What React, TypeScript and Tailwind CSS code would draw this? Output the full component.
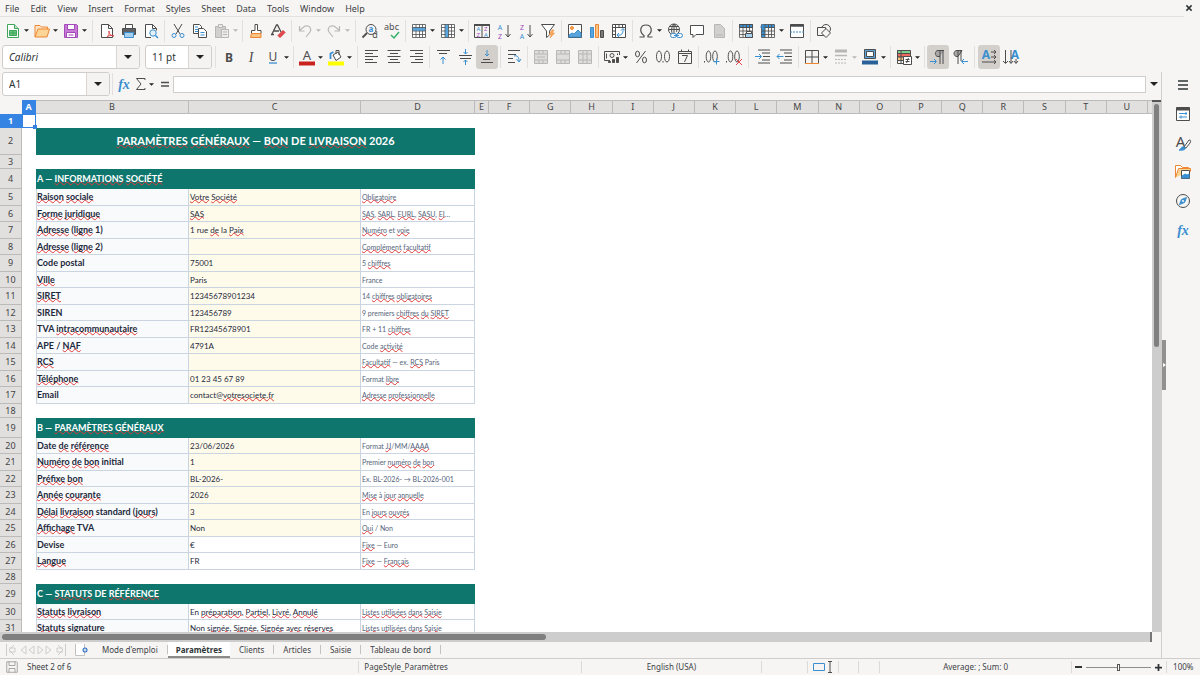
import type { ReactNode } from "react";
import clsx from "clsx";

const ink = "#4d4d4d";
const blue = "#3a8fd0";
const pale = "#b9b7b5";
const purple = "#a349b8";
const orange = "#ed8733";

interface GlyphProps {
  children: ReactNode;
  size?: string;
  color?: string;
}

function Glyph({ children, size = "h-4 w-4", color = ink }: GlyphProps) {
  return (
    <svg
      viewBox="0 0 16 16"
      className={clsx(size, "shrink-0 overflow-visible")}
      fill="none"
      stroke={color}
      strokeWidth="1"
      aria-hidden="true"
    >
      {children}
    </svg>
  );
}

interface LetterProps {
  x: number;
  y: number;
  size: number;
  fill?: string;
  bold?: boolean;
  italic?: boolean;
  serif?: boolean;
  children: string;
}

function Letter({ x, y, size, fill = ink, bold, italic, serif, children }: LetterProps) {
  return (
    <text
      x={x}
      y={y}
      fontSize={size}
      fill={fill}
      stroke="none"
      textAnchor="middle"
      fontWeight={bold ? 700 : 400}
      fontStyle={italic ? "italic" : "normal"}
      fontFamily={serif ? "Liberation Serif, serif" : "Noto Sans, sans-serif"}
    >
      {children}
    </text>
  );
}

const gridLines = "M1.5 1.5h13v13h-13zM1.5 4.5h13M1.5 8h13M1.5 11.5h13M5 1.5v13M8.5 1.5v13M11.5 1.5v13";

const icons: Record<string, ReactNode> = {
  new: (
    <Glyph color="#3fa65a">
      <path d="M2.5 1.5h7l4 4v9h-11z" fill="#fff" />
      <path d="M9.5 1.5v4h4" fill="#bfe3c6" />
      <path d="M4.5 7.5h7v5h-7zM4.5 10h7M8 7.5v5" fill="#6cc585" />
    </Glyph>
  ),
  open: (
    <Glyph color={orange}>
      <path d="M1 14V2.500h5l1.500 1.500h6v2" fill="#fbe3c4" />
      <path d="M1 14l3-8h11.500l-2.500 8z" fill="#fcd596" />
    </Glyph>
  ),
  save: (
    <Glyph color={purple}>
      <path d="M1.500 1.500h12l1 1v12h-13z" fill="#c77bd6" />
      <path d="M4.500 1.500h7v5h-7zM3.500 9.500h9v5h-9z" fill="#fff" />
      <path d="M5.500 12h5" />
    </Glyph>
  ),
  pdf: (
    <Glyph>
      <path d="M2.500 1.500h7l4 4v9h-11z" fill="#fff" />
      <path d="M9.500 1.500v4h4" />
      <path d="M8 14c3-3 3-6 2-6s0 5 5 5c0-1-5-1-7 1z" stroke="#dd4b4b" />
    </Glyph>
  ),
  print: (
    <Glyph>
      <path d="M4.500 5.500v-4h7v4" fill="#fff" />
      <path d="M1.500 5.500h13v6h-13z" fill="#5d6166" />
      <path d="M3.500 9.500h9v5h-9z" fill="#a6d0ee" stroke={blue} />
    </Glyph>
  ),
  preview: (
    <Glyph>
      <path d="M8 14.500h-5.500v-13h7l4 4v2" fill="#fff" />
      <path d="M9.500 1.500v4h4" />
      <circle cx="10" cy="10" r="3.200" stroke={blue} fill="#e3f1fb" />
      <path d="M12.500 12.500l2.500 2.500" stroke={blue} strokeWidth="1.500" />
    </Glyph>
  ),
  cut: (
    <Glyph>
      <path d="M4 1l6 10M12 1L6 11" />
      <circle cx="4" cy="12.500" r="2" stroke={blue} />
      <circle cx="12" cy="12.500" r="2" stroke={blue} />
    </Glyph>
  ),
  copy: (
    <Glyph>
      <path d="M1.500 1.500h6l2 2v7h-8z" fill="#fff" />
      <path d="M3 4h3M3 6.500h3M3 8.500h3" stroke={blue} />
      <path d="M6.500 5.500h5l3 3v6h-8z" fill="#fff" />
      <path d="M8.500 9.500h4M8.500 12h4" stroke={blue} />
    </Glyph>
  ),
  paste: (
    <Glyph color={pale}>
      <path d="M1.500 3.500h10v11h-10z" fill="#d2d0ce" />
      <path d="M4.500 1.500h4v3h-4zM7.500 6.500h7v8h-7zM9 9h4M9 11.500h4" fill="#ececeb" />
    </Glyph>
  ),
  brush: (
    <Glyph>
      <path d="M7 1.500h2.500v6H13v3H3.500v-3H7z" fill="#fff" />
      <path d="M3.500 10.500H13v4H2.500z" fill="#f9c483" stroke={orange} />
    </Glyph>
  ),
  clear: (
    <Glyph>
      <path d="M2 11L6.500 2h1L11 9M4 8h5M1 11.500h3" strokeWidth="1.300" />
      <path d="M8 12.500l5-5 2 2-5 5z" fill="#e5484d" stroke="#d23338" />
    </Glyph>
  ),
  undo: (
    <Glyph color={pale}>
      <path d="M3 7l5-4c5-1 7 3 5 6l-4 5M2.500 3v5h5" strokeWidth="1.200" />
    </Glyph>
  ),
  redo: (
    <Glyph color={pale}>
      <path d="M13 7L8 3C3 2 1 6 3 9l4 5M13.500 3v5h-5" strokeWidth="1.200" />
    </Glyph>
  ),
  find: (
    <Glyph>
      <circle cx="9" cy="6.500" r="5" />
      <path d="M5 10l-4.500 4.500" strokeWidth="1.800" />
      <Letter x={9} y={9} size={8} fill={blue} bold>a</Letter>
      <Letter x={13} y={15} size={9}>d</Letter>
    </Glyph>
  ),
  spell: (
    <Glyph>
      <Letter x={7.500} y={7} size={9}>abc</Letter>
      <path d="M7 12l3 3 5-6" stroke="#33b26b" strokeWidth="1.500" />
    </Glyph>
  ),
  row: (
    <Glyph>
      <path d="M1.500 1.500h13v13h-13z" fill="#fff" stroke="none" />
      <path d="M1.500 4.500h13v3.500h-13z" fill="#5aa5dc" stroke="none" />
      <path d={gridLines} strokeWidth=".8" />
      <path d="M2 6.300h12" stroke="#5aa5dc" strokeWidth="2.500" />
    </Glyph>
  ),
  column: (
    <Glyph>
      <path d="M1.500 1.500h13v13h-13z" fill="#fff" stroke="none" />
      <path d="M5 1.500h3.500v13H5z" fill="#5aa5dc" stroke="none" />
      <path d={gridLines} strokeWidth=".8" />
      <path d="M6.800 2v12" stroke="#5aa5dc" strokeWidth="2.500" />
    </Glyph>
  ),
  sort: (
    <Glyph>
      <path d="M.500 1.500h15v13H.500zM8 1.500v13" />
      <path d="M0 2h16" strokeWidth="2" />
      <Letter x={4.300} y={8} size={6} fill={blue}>A</Letter>
      <Letter x={4.300} y={14} size={6} fill={purple}>Z</Letter>
      <Letter x={11.800} y={8} size={6} fill={purple}>Z</Letter>
      <Letter x={11.800} y={14} size={6} fill={blue}>A</Letter>
    </Glyph>
  ),
  ascending: (
    <Glyph>
      <Letter x={4} y={6.500} size={7} fill={blue}>A</Letter>
      <Letter x={4} y={15.500} size={7} fill={purple}>Z</Letter>
      <path d="M12 2v12M9.500 11l2.500 3 2.500-3" />
    </Glyph>
  ),
  descending: (
    <Glyph>
      <Letter x={4} y={6.500} size={7} fill={purple}>Z</Letter>
      <Letter x={4} y={15.500} size={7} fill={blue}>A</Letter>
      <path d="M12 2v12M9.500 11l2.500 3 2.500-3" />
    </Glyph>
  ),
  filter: (
    <Glyph>
      <path d="M1.500 1.500h13L9.500 8v4l-3 2.500V8z" fill="#fff" />
      <path d="M12 7l-3 4.500h2.500L10 15l4.500-5H12l2-3z" fill="#f8ae5a" stroke={orange} strokeWidth=".6" />
    </Glyph>
  ),
  image: (
    <Glyph>
      <path d="M1.500 1.500h13v13h-13z" fill="#fff" />
      <path d="M2 14v-2l3-2 2 1 4-4 3 3v4z" fill="#5aa5dc" stroke={blue} />
      <circle cx="5" cy="5" r="1.500" fill="#f8ae5a" stroke={orange} />
    </Glyph>
  ),
  chart: (
    <Glyph>
      <path d="M1.500 4.500h3v10h-3z" fill="#5aa5dc" stroke={blue} />
      <path d="M6.500 1.500h3v13h-3z" fill="#f9c483" stroke={orange} />
      <path d="M11.500 7.500h3v7h-3z" fill="#7a7a7a" />
    </Glyph>
  ),
  pivot: (
    <Glyph>
      <path d="M1.500 1.500h13v13h-13zM1.500 4.500h13M4.500 1.500v13M8 1.500v3M11.500 1.500v3M1.500 8h3M1.500 11.500h3" fill="#fff" />
      <path d="M6.500 12c4 1 6-2 5.500-6M8 10l-2 2 2 2M10 7.500l2-2 2 2" stroke={blue} />
    </Glyph>
  ),
  omega: (
    <Glyph>
      <path d="M1.500 14H6v-1.500C1 9 2 2 8 2s7 7 2 10.500V14h4.500" strokeWidth="1.200" />
    </Glyph>
  ),
  link: (
    <Glyph>
      <circle cx="7" cy="6.500" r="5.500" />
      <path d="M1.500 6.500h11M2.500 3.500h9M7 1v11M7 1C4 4 4 9 6 12M7 1c3 3 3 6 2.500 8" />
      <rect x="3.500" y="10.500" width="6" height="4" rx="2" stroke={blue} fill="#f6f5f4" />
      <rect x="9.500" y="10.500" width="6" height="4" rx="2" stroke={blue} fill="#f6f5f4" />
      <path d="M7 12.500h5" stroke={blue} />
    </Glyph>
  ),
  comment: (
    <Glyph>
      <path d="M1.500 2.500h13v9H7l-3 3v-3H1.500z" fill="#fff" />
    </Glyph>
  ),
  headers: (
    <Glyph color={pale}>
      <path d="M3.500 1.500h6l4 4v9h-10z" fill="#d2d0ce" />
      <path d="M5 12h7" />
    </Glyph>
  ),
  printArea: (
    <Glyph>
      <path d="M1.500 1.500h13v3h-13z" fill={blue} />
      <path d={gridLines} strokeWidth=".8" />
      <path d="M7.500 10.500h7v4h-7z" fill="#a6d0ee" />
      <path d="M8.500 8.500h5v2h-5z" fill="#fff" />
    </Glyph>
  ),
  freeze: (
    <Glyph>
      <path d="M1.500 1.500h13v3.500H5v9.500H1.500z" fill={blue} stroke="none" />
      <path d={gridLines} strokeWidth=".8" />
      <path d="M0 4h5M2.500 1v6" stroke={blue} />
    </Glyph>
  ),
  split: (
    <Glyph>
      <path d="M1.500 1.500h13v13h-13z" fill="#fff" />
      <path d="M1.500 2.500h13" strokeWidth="2.500" />
      <path d="M1 9h14" stroke={blue} strokeDasharray="2 1" />
    </Glyph>
  ),
  shapes: (
    <Glyph>
      <circle cx="10" cy="6" r="4.500" />
      <path d="M1.500 4.500h8v8h-8z" fill="#f6f5f4" />
      <path d="M10 5.500l4.500 4.500-4.500 4.500L5.500 10z" fill="#f6f5f4" />
    </Glyph>
  ),
  bold: (
    <Glyph>
      <Letter x={8} y={12.500} size={12} bold>B</Letter>
    </Glyph>
  ),
  italic: (
    <Glyph>
      <Letter x={8} y={12.500} size={14} italic serif>I</Letter>
    </Glyph>
  ),
  underline: (
    <Glyph>
      <Letter x={8} y={11.500} size={12}>U</Letter>
      <path d="M4 14h8" stroke={blue} strokeWidth="1.300" />
    </Glyph>
  ),
  fontColor: (
    <Glyph>
      <Letter x={8} y={11} size={13}>A</Letter>
      <path d="M0 14.500h16" stroke="#c9211e" strokeWidth="4" />
    </Glyph>
  ),
  fill: (
    <Glyph>
      <path d="M2.500 10V4.500l3-1.500" stroke={blue} strokeWidth="1.800" />
      <path d="M5 6l5-3 3 5-5 3.500zM8 5V1.500h3V6" fill="#fff" />
      <path d="M0 14.500h16" stroke="#ffff00" strokeWidth="4" />
    </Glyph>
  ),
  left: (
    <Glyph>
      <path d="M1 1.500h13M1 4.500h8M1 7.500h13M1 10.500h8M1 13.500h12" />
    </Glyph>
  ),
  center: (
    <Glyph>
      <path d="M1.500 1.500h13M4 4.500h8M1.500 7.500h13M4 10.500h8M2 13.500h12" />
    </Glyph>
  ),
  right: (
    <Glyph>
      <path d="M2 1.500h13M7 4.500h8M2 7.500h13M7 10.500h8M3 13.500h12" />
    </Glyph>
  ),
  top: (
    <Glyph>
      <path d="M2 1.500h13M4 4.500h8" />
      <path d="M8 15V8M5.500 10.500L8 8l2.500 2.500" stroke={blue} />
    </Glyph>
  ),
  middle: (
    <Glyph>
      <path d="M2 6.500h13M3 9.500h11" />
      <path d="M8.500 0v5M6.500 3l2 2 2-2M8.500 16v-5M6.500 13l2-2 2 2" stroke={blue} />
    </Glyph>
  ),
  bottom: (
    <Glyph>
      <path d="M4 10.500h7M2 13.500h12" />
      <path d="M8 1v6M6 5l2 2 2-2" stroke={blue} />
    </Glyph>
  ),
  wrap: (
    <Glyph>
      <path d="M2 1.500h12M2 5.500h8M2 9.500h5M2 13.500h7" />
      <path d="M8 7c3-1 5 1 5 5M10.500 10l2.500 3 2-3" stroke={blue} />
    </Glyph>
  ),
  merge: (
    <Glyph color={pale}>
      <path d="M1.500 1.500h13v13h-13zM1.500 5h13M1.500 11h13M6 1.500V5M10 1.500V5M6 11v3.500M10 11v3.500M4 8h8" fill="#dedddb" />
    </Glyph>
  ),
  mergeCells: (
    <Glyph color={pale}>
      <path d="M1.500 1.500h13v13h-13zM1.500 5h13M1.500 11h13M6 1.500V5M10 1.500V5M6 11v3.500M10 11v3.500" fill="#dedddb" />
    </Glyph>
  ),
  unmerge: (
    <Glyph color={pale}>
      <path d="M1.500 1.500h13v13h-13zM1.500 5h13M1.500 11h13M6 1.500v13M10 1.500v13" fill="#dedddb" />
    </Glyph>
  ),
  currency: (
    <Glyph>
      <path d="M6 11.500H.500v-9h15V6M2.500 4.500v5M13.500 4.500V6" />
      <circle cx="8" cy="6.500" r="2" />
      <path d="M8.500 10.500h2v3h-2zM12.500 8.500h2v5h-2zM4.500 12.500h2v1h-2z" fill={ink} />
    </Glyph>
  ),
  percent: (
    <Glyph>
      <path d="M12.500 2l-9 12" />
      <ellipse cx="4.500" cy="5" rx="2" ry="2.800" />
      <ellipse cx="11.500" cy="11" rx="2" ry="2.800" />
    </Glyph>
  ),
  number: (
    <Glyph>
      <ellipse cx="4" cy="7.500" rx="2.500" ry="5.500" />
      <ellipse cx="12" cy="7.500" rx="2.500" ry="5.500" />
      <path d="M8 12v1.500" />
    </Glyph>
  ),
  date: (
    <Glyph>
      <path d="M1.500 2.500h13v12h-13zM1.500 4.500h13M4.500.500v2M11.500.500v2" />
      <path d="M5 6.500h5.500L7.500 13" />
    </Glyph>
  ),
  addDecimal: (
    <Glyph>
      <path d="M.500 12v1.500" />
      <ellipse cx="4.500" cy="7.500" rx="2.300" ry="5.500" />
      <ellipse cx="11" cy="7.500" rx="2.300" ry="5.500" />
      <path d="M12.500 9.500v6M9.500 12.500h6" stroke={blue} />
    </Glyph>
  ),
  removeDecimal: (
    <Glyph>
      <path d="M.500 12v1.500" />
      <ellipse cx="4.500" cy="7.500" rx="2.300" ry="5.500" />
      <ellipse cx="11" cy="7.500" rx="2.300" ry="5.500" />
      <path d="M10 10l6 6M16 10l-6 6" stroke="#e5484d" />
    </Glyph>
  ),
  indent: (
    <Glyph>
      <path d="M3 1h12M7 4h8M8 7.500h7M7 11h8M3 14h12" />
      <path d="M0 7.500h6M4 5l2.500 2.500L4 10" stroke={blue} />
    </Glyph>
  ),
  outdent: (
    <Glyph>
      <path d="M3 1h12M7 4h8M8 7.500h7M7 11h8M3 14h12" />
      <path d="M6.500 7.500H0M2.500 5L0 7.500 2.500 10" stroke={blue} />
    </Glyph>
  ),
  borders: (
    <Glyph>
      <path d="M1.500 14.500v-13h13v13M8 1.500v13M1.500 8h13" />
      <path d="M1 14.500h14" stroke={orange} />
    </Glyph>
  ),
  borderStyle: (
    <Glyph color={pale}>
      <path d="M2 2h12" strokeWidth="3" />
      <path d="M2 6.500h12" strokeWidth="1.500" />
      <path d="M2 10.500h12M2 14h12" strokeDasharray="2 1" />
    </Glyph>
  ),
  borderColor: (
    <Glyph>
      <path d="M2.500.500h11v9h-11z" fill="#5aa5dc" />
      <path d="M4.500 2.500h7v5h-7z" fill="#fff" />
      <path d="M0 13.500h16" stroke="#2a6099" strokeWidth="4" />
    </Glyph>
  ),
  conditional: (
    <Glyph>
      <path d="M1.500 1.500h13v3h-13z" fill="#7fd18f" />
      <path d="M1.500 4.500h13V8h-13z" fill="#ee6b5f" />
      <path d="M1.500 8h6v3.500h-6z" fill="#f9c483" />
      <path d="M5 1.500v13M1.500 14.500h6M1.500 1.500v13" />
      <path d="M7.500 7.500h8v8h-8zM9.500 10.500h4M9.500 12.500h4M10.500 14l2-5" fill="#fff" />
    </Glyph>
  ),
  ltr: (
    <Glyph>
      <path d="M14 1.500H8c-3.500 0-3.500 6 0 6h2" fill="#a9a7a5" />
      <path d="M10 1.500V15M13 1.500V15" />
      <path d="M0 12.500h6M4 10l2.500 2.500L4 15" stroke={blue} />
    </Glyph>
  ),
  rtl: (
    <Glyph>
      <path d="M10 1.500H5c-4 0-4 6 0 6h1z" fill="#a9a7a5" />
      <path d="M6 1.500V15M9 1.500V12" />
      <path d="M16 12.500h-6M12 10l-2.500 2.500L12 15" stroke={blue} />
    </Glyph>
  ),
  horizontalText: (
    <Glyph>
      <Letter x={5} y={9.500} size={12} fill={blue} bold>A</Letter>
      <path d="M10 3h5M10 8h5M1 13h14M13 1l2 2-2 2M13 6l2 2-2 2M13 11l2 2-2 2" />
    </Glyph>
  ),
  verticalText: (
    <Glyph>
      <Letter x={12} y={9.500} size={12} fill={blue} bold>A</Letter>
      <path d="M2.500 1v13M8 1v13M13 10v4M0 12l2.500 2.500L5 12M6 12l2 2.500 2-2.500M11 12l2 2.500 2-2.500" />
    </Glyph>
  ),
  fx: (
    <Glyph>
      <Letter x={8} y={12.500} size={14} fill={blue} bold italic serif>fx</Letter>
    </Glyph>
  ),
  sum: (
    <Glyph>
      <path d="M12 4V2.500H3.500L8 8l-4.500 5.500H12V12" />
    </Glyph>
  ),
  equals: (
    <Glyph>
      <path d="M4 6.500h8M4 10h8" strokeWidth="1.600" />
    </Glyph>
  ),
  menu: (
    <Glyph>
      <path d="M3 4h10M3 8h10M3 12h10" stroke="#2e3436" strokeWidth="1.500" />
    </Glyph>
  ),
  properties: (
    <Glyph>
      <path d="M1.500 1.500h13v13h-13z" fill="#fff" />
      <path d="M1.500 3h13" strokeWidth="3" />
      <path d="M4 7.500h8M4 11h8M11 6v3M6 9.500v3" stroke={blue} />
    </Glyph>
  ),
  styles: (
    <Glyph>
      <Letter x={5.500} y={12} size={15}>A</Letter>
      <path d="M9 12l5-7c2 0 2 1 1 3l-4 5z" fill="#fff" />
      <path d="M4 15c2 0 2-4 5-3s1 4-5 3z" fill={blue} stroke={blue} />
    </Glyph>
  ),
  gallery: (
    <Glyph color={orange}>
      <path d="M.500 13.500v-12h5l2 2h6v2" fill="#fff" />
      <path d="M.500 13.500l3-9h12v3" fill="#fcd596" />
      <path d="M6.500 6.500h8v8h-8z" fill="#fff" stroke={ink} />
      <path d="M7 14v-2l3-2 2 1 2-1v4z" fill={blue} stroke={blue} />
    </Glyph>
  ),
  navigator: (
    <Glyph>
      <circle cx="8" cy="8" r="6.500" />
      <path d="M11.500 4.500L9.500 9.500 4.500 11.500 6.500 6.500z" fill={blue} stroke={blue} />
      <circle cx="8" cy="8" r="1" fill="#fff" stroke="none" />
    </Glyph>
  ),
};

type Item =
  | { kind: "sep" | "gap" }
  | { kind: "tool"; icon: string; label: string; menu?: boolean; pressed?: boolean; muted?: boolean };

const tool = (icon: string, label: string, extra: { menu?: boolean; pressed?: boolean; muted?: boolean } = {}): Item => ({
  kind: "tool",
  icon,
  label,
  ...extra,
});
const sep: Item = { kind: "sep" };
const gap: Item = { kind: "gap" };

const standardBar: Item[] = [
  tool("new", "New", { menu: true }),
  tool("open", "Open", { menu: true }),
  tool("save", "Save", { menu: true }),
  gap,
  tool("pdf", "Export as PDF"),
  tool("print", "Print"),
  tool("preview", "Print Preview"),
  sep,
  tool("cut", "Cut"),
  tool("copy", "Copy"),
  tool("paste", "Paste", { menu: true, muted: true }),
  sep,
  tool("brush", "Clone Formatting"),
  tool("clear", "Clear Direct Formatting"),
  sep,
  tool("undo", "Undo", { menu: true, muted: true }),
  tool("redo", "Redo", { menu: true, muted: true }),
  gap,
  tool("find", "Find and Replace"),
  tool("spell", "Spelling"),
  sep,
  tool("row", "Row", { menu: true }),
  tool("column", "Column", { menu: true }),
  sep,
  tool("sort", "Sort"),
  tool("ascending", "Sort Ascending"),
  tool("descending", "Sort Descending"),
  tool("filter", "AutoFilter"),
  sep,
  tool("image", "Insert Image"),
  tool("chart", "Insert Chart"),
  tool("pivot", "Pivot Table"),
  sep,
  tool("omega", "Special Character", { menu: true }),
  tool("link", "Insert Hyperlink"),
  tool("comment", "Insert Comment"),
  tool("headers", "Headers and Footers"),
  sep,
  tool("printArea", "Define Print Area"),
  tool("freeze", "Freeze Rows and Columns", { menu: true }),
  tool("split", "Split Window"),
  sep,
  tool("shapes", "Show Draw Functions"),
];

const formatBar: Item[] = [
  sep,
  tool("bold", "Bold"),
  tool("italic", "Italic"),
  tool("underline", "Underline", { menu: true }),
  sep,
  tool("fontColor", "Font Color", { menu: true }),
  tool("fill", "Background Color", { menu: true }),
  gap,
  tool("left", "Align Left"),
  tool("center", "Center Horizontally"),
  tool("right", "Align Right"),
  sep,
  tool("top", "Align Top"),
  tool("middle", "Center Vertically"),
  tool("bottom", "Align Bottom", { pressed: true }),
  sep,
  tool("wrap", "Wrap Text"),
  sep,
  tool("merge", "Merge and Center"),
  tool("mergeCells", "Merge Cells"),
  tool("unmerge", "Unmerge Cells"),
  sep,
  tool("currency", "Format as Currency", { menu: true }),
  tool("percent", "Format as Percent"),
  tool("number", "Format as Number"),
  tool("date", "Format as Date"),
  sep,
  tool("addDecimal", "Add Decimal Place"),
  tool("removeDecimal", "Delete Decimal Place"),
  gap,
  tool("indent", "Increase Indent"),
  tool("outdent", "Decrease Indent"),
  sep,
  tool("borders", "Borders", { menu: true }),
  tool("borderStyle", "Border Style", { menu: true, muted: true }),
  tool("borderColor", "Border Color", { menu: true }),
  sep,
  tool("conditional", "Conditional Formatting", { menu: true }),
  sep,
  tool("ltr", "Left-To-Right", { pressed: true }),
  tool("rtl", "Right-To-Left"),
  gap,
  tool("horizontalText", "Text direction from left to right", { pressed: true }),
  tool("verticalText", "Text direction from top to bottom"),
];

const menus = ["File", "Edit", "View", "Insert", "Format", "Styles", "Sheet", "Data", "Tools", "Window", "Help"];

// [word] marks text flagged by the spell checker
type Row =
  | { kind: "blank" }
  | { kind: "title" | "section"; text: string }
  | { kind: "data"; label: string; value: string; note: string; fixed?: boolean };

const data = (label: string, value: string, note: string, fixed = false): Row => ({ kind: "data", label, value, note, fixed });

const rows: Row[] = [
  { kind: "blank" },
  { kind: "title", text: "[PARAMÈTRES] [GÉNÉRAUX] — [BON] DE [LIVRAISON] 2026" },
  { kind: "blank" },
  { kind: "section", text: "A — [INFORMATIONS] [SOCIÉTÉ]" },
  data("[Raison] [sociale]", "[Votre] [Société]", "[Obligatoire]"),
  data("[Forme] [juridique]", "[SAS]", "[SAS], [SARL], [EURL], [SASU], [EI]…"),
  data("[Adresse] ([ligne] 1)", "1 rue [de] la [Paix]", "[Numéro] et [voie]"),
  data("[Adresse] ([ligne] 2)", "", "[Complément] [facultatif]"),
  data("Code postal", "75001", "5 [chiffres]"),
  data("[Ville]", "Paris", "France"),
  data("[SIRET]", "12345678901234", "14 [chiffres] [obligatoires]"),
  data("SIREN", "123456789", "9 premiers [chiffres] [du] [SIRET]"),
  data("TVA [intracommunautaire]", "FR12345678901", "FR + 11 [chiffres]"),
  data("APE / [NAF]", "4791A", "Code [activité]"),
  data("[RCS]", "", "[Facultatif] — ex. [RCS] Paris"),
  data("[Téléphone]", "01 23 45 67 89", "Format [libre]"),
  data("Email", "contact@[votresociete.fr]", "[Adresse] [professionnelle]"),
  { kind: "blank" },
  { kind: "section", text: "B — [PARAMÈTRES] [GÉNÉRAUX]" },
  data("Date [de] [référence]", "23/06/2026", "Format [JJ]/MM/[AAAA]"),
  data("[Numéro] [de] [bon] initial", "1", "Premier [numéro] [de] [bon]"),
  data("[Préfixe] [bon]", "BL-2026-", "Ex. BL-2026- → BL-2026-001"),
  data("[Année] [courante]", "2026", "[Mise] à [jour] [annuelle]"),
  data("[Délai] [livraison] standard ([jours])", "3", "En [jours] [ouvrés]"),
  data("[Affichage] TVA", "Non", "[Oui] / Non"),
  data("Devise", "€", "[Fixe] — Euro", true),
  data("[Langue]", "FR", "[Fixe] — [Français]", true),
  { kind: "blank" },
  { kind: "section", text: "C — [STATUTS] DE [RÉFÉRENCE]" },
  data("[Statuts] [livraison]", "En [préparation], [Partiel], [Livré], [Annulé]", "[Listes] [utilisées] [dans] [Saisie]", true),
  data("[Statuts] signature", "Non [signée], [Signée], [Signée] [avec] [réserves]", "[Listes] [utilisées] [dans] [Saisie]", true),
];

const columns = "ABCDEFGHIJKLMNOPQRSTU".split("");
const sheets = ["Mode d'emploi", "Paramètres", "Clients", "Articles", "Saisie", "Tableau de bord"];

function Spelled({ text }: { text: string }) {
  return (
    <>
      {text.split(/(\[[^\]]*\])/).map((part, i) =>
        part.startsWith("[") ? (
          <span
            key={i}
            className="underline decoration-[#e03a3a] decoration-wavy decoration-1 underline-offset-[-1px] [text-decoration-skip-ink:none]"
          >
            {part.slice(1, -1)}
          </span>
        ) : (
          part
        ),
      )}
    </>
  );
}

function Caret({ muted, large }: { muted?: boolean; large?: boolean }) {
  return (
    <svg
      viewBox="0 0 8 4"
      className={clsx("shrink-0", large ? "h-1 w-2" : "h-[3px] w-[5px]", muted ? "fill-[#b9b7b5]" : "fill-[#222]")}
      aria-hidden="true"
    >
      <path d="M0 0h8L4 4z" />
    </svg>
  );
}

function Toolbar({ items, label }: { items: Item[]; label: string }) {
  return (
    <div className="flex items-center" role="toolbar" aria-label={label}>
      {items.map((item, i) => {
        if (item.kind !== "tool") {
          return (
            <span key={i} className={clsx("flex h-[22px] justify-center", item.kind === "gap" ? "w-[7px]" : "w-[5px]")}>
              <span className="w-px bg-[#e2e0de]" />
            </span>
          );
        }
        return (
          <button
            key={i}
            type="button"
            aria-label={item.label}
            className={clsx(
              "flex h-6 shrink-0 items-center rounded-[3px]",
              item.menu ? "w-[29px]" : "w-[22px]",
              item.pressed && "bg-[#d3d0cc]",
            )}
          >
            <span className="flex w-[22px] shrink-0 justify-center">{icons[item.icon]}</span>
            {item.menu && <Caret muted={item.muted} />}
          </button>
        );
      })}
    </div>
  );
}

function Combo({ label, value, width, italic }: { label: string; value: string; width: string; italic?: boolean }) {
  return (
    <div className={clsx("relative flex h-6 shrink-0 overflow-hidden rounded-[3px] border border-[#d0cdca] bg-white", width)}>
      <select aria-label={label} className={clsx("w-full appearance-none pl-1.5 text-[10px] text-[#2e3436]", italic && "italic")}>
        <option>{value}</option>
      </select>
      <span className="pointer-events-none absolute inset-y-0 right-0 flex w-[23px] items-center justify-center border-l border-[#d8d5d2] bg-[#f4f3f2]">
        <Caret large />
      </span>
    </div>
  );
}

function SheetRow({ row, index }: { row: Row; index: number }) {
  const number = index + 1;
  const selected = number === 1;
  const cell = "overflow-hidden border-r border-b border-[#cbd5e1] p-0 align-middle whitespace-nowrap";

  return (
    <tr
      className={clsx(
        row.kind === "blank" && "h-[14px]",
        row.kind === "title" && "h-[27px]",
        row.kind === "section" && "h-5",
        row.kind === "data" && (number % 2 ? "h-[17px]" : "h-4"),
      )}
    >
      <th
        scope="row"
        className={clsx(
          "border-r border-b p-0 align-middle text-[9px] leading-3",
          selected ? "border-[#3584e4] bg-[#3584e4] font-bold text-white" : "border-[#bdbbb9] bg-[#e1e0df] font-normal text-[#444]",
        )}
      >
        {number}
      </th>
      <td className="p-0">
        {selected && (
          <div className="relative h-[14px] border border-[#3584e4]">
            <span className="absolute -right-0.5 -bottom-0.5 h-1 w-1 bg-[#3584e4]" />
          </div>
        )}
      </td>
      {row.kind === "blank" && <td colSpan={3} className="p-0" />}
      {row.kind === "title" && (
        <td colSpan={3} className="bg-[#0f766e] p-0 pb-0.5 text-center font-[Lato] text-[11px] leading-4 font-bold text-white">
          <Spelled text={row.text} />
        </td>
      )}
      {row.kind === "section" && (
        <td colSpan={3} className="bg-[#0f766e] p-0 pl-px font-[Lato] text-[9px] leading-3 font-bold text-white">
          <Spelled text={row.text} />
        </td>
      )}
      {row.kind === "data" && (
        <>
          <td className={clsx(cell, "border-l bg-[#f8fafc] font-[Lato] text-[9px] leading-3 font-bold text-[#1e293b]")}>
            <Spelled text={row.label} />
          </td>
          <td className={clsx(cell, "pl-px font-[Lato] text-[8px] leading-3 text-[#1e293b]", row.fixed ? "bg-white" : "bg-[#fffbeb]")}>
            <Spelled text={row.value} />
          </td>
          <td className={clsx(cell, "pl-px font-[Lato] text-[7px] leading-3 text-[#55647a]")}>
            <Spelled text={row.note} />
          </td>
        </>
      )}
      <td colSpan={18} className="p-0" />
    </tr>
  );
}

function Spreadsheet() {
  return (
    <div className="min-h-0 flex-1 overflow-hidden bg-white">
      <table className="w-full table-fixed border-separate border-spacing-0">
        <colgroup>
          <col className="w-[22px]" />
          <col className="w-[14px]" />
          <col className="w-[153px]" />
          <col className="w-[172px]" />
          <col className="w-[114px]" />
          <col className="w-[14px]" />
          {columns.slice(5).map((name) => (
            <col key={name} />
          ))}
          <col className="w-1" />
        </colgroup>
        <thead>
          <tr className="h-[14px] text-[9px] leading-3">
            <td className="bg-[#f6f5f4] p-0" />
            {columns.map((name) => (
              <th
                key={name}
                scope="col"
                className={clsx(
                  "border-t border-r border-b p-0 leading-3",
                  name === "A"
                    ? "border-[#3584e4] bg-[#3584e4] font-bold text-white"
                    : "border-[#bdbbb9] bg-[#e1e0df] font-normal text-[#444]",
                )}
              >
                {name}
              </th>
            ))}
            <td className="border-y border-[#bdbbb9] bg-[#e1e0df] p-0" />
          </tr>
        </thead>
        <tbody>
          {rows.map((row, i) => (
            <SheetRow key={i} row={row} index={i} />
          ))}
        </tbody>
      </table>
    </div>
  );
}

function SheetTabs() {
  return (
    <div className="flex h-4 items-stretch text-[8px] text-[#3d4245]">
      <svg viewBox="0 0 60 12" className="mx-1.5 h-3 w-[60px] self-center" fill="none" stroke="#cfcdcb" aria-hidden="true">
        <path d="M.500 0v12M8 1L3 6l5 5M3 4h6v4H3M20 2l-5 4 5 4zM28 2l-5 4 5 4zM32 2l5 4-5 4zM40 2l5 4-5 4zM52 1l5 5-5 5M57 4h-6v4h6M59.500 0v12" />
      </svg>
      <button type="button" aria-label="Add Sheet" className="ml-[3px] flex w-[18px] items-center">
        <svg viewBox="0 0 14 12" className="h-3 w-[14px]" aria-hidden="true">
          <path d="M.500 0v11.500h9V0" fill="#fff" stroke="#c4c2c0" />
          <circle cx="10" cy="6" r="2.500" fill="#2f6fc4" />
          <path d="M8.500 6h3M10 4.500v3" stroke="#fff" />
        </svg>
      </button>
      {sheets.map((name) => {
        const active = name === "Paramètres";
        return (
          <button
            key={name}
            type="button"
            className={clsx(
              "flex items-center border-b-2",
              active ? "border-[#8a8a8a] bg-white font-bold text-[#2e3436]" : "border-transparent",
            )}
          >
            <span className={clsx("leading-[9px]", active ? "px-2" : "border-r border-[#c4c2c0] px-[9px]")}>{name}</span>
          </button>
        );
      })}
    </div>
  );
}

function StatusBar() {
  return (
    <footer className="flex h-[17px] items-center border-t border-[#cfccca] text-[8px] text-[#3d4245]">
      <div className="flex h-3 flex-[358_0_0] items-center gap-[9px] pl-1.5">
        <Glyph size="h-3 w-3" color="#8f8d8b">
          <path d="M1 1h13l1 1v13H1zM4 1v5h8V1M4 15v-5h8v5" />
        </Glyph>
        Sheet 2 of 6
      </div>
      <div className="flex h-3 flex-[220_0_0] items-center border-l border-[#dcdad8] pl-[5px]">PageStyle_Paramètres</div>
      <div className="flex h-3 flex-[182_0_0] items-center justify-center border-l border-[#dcdad8]">English (USA)</div>
      <div className="h-3 flex-[46_0_0] border-l border-[#dcdad8]" />
      <div className="flex h-3 flex-[30_0_0] items-center justify-center border-l border-[#dcdad8]">
        <svg viewBox="0 0 20 12" className="h-3 w-5" fill="none" aria-hidden="true">
          <path d="M.500 2.500h11v7H.500z" stroke={blue} />
          <path d="M17 1v10M15 .500h4M15 11.500h4" stroke={ink} />
        </svg>
      </div>
      <div className="h-3 flex-[20_0_0] border-l border-[#dcdad8]" />
      <div className="h-3 flex-[20_0_0] border-l border-[#dcdad8]" />
      <div className="flex h-3 flex-[194_0_0] items-center justify-center border-l border-[#dcdad8]">Average: ; Sum: 0</div>
      <div className="flex h-3 flex-[95_0_0] items-center justify-center gap-1 border-l border-[#dcdad8]">
        <button type="button" aria-label="Zoom Out" className="h-0.5 w-[7px] bg-[#2e3436]" />
        <input
          type="range"
          aria-label="Zoom"
          min="0"
          max="100"
          defaultValue="50"
          className="h-px w-[65px] appearance-none bg-[#8f8d8b] [&::-webkit-slider-thumb]:h-[7px] [&::-webkit-slider-thumb]:w-[3px] [&::-webkit-slider-thumb]:appearance-none [&::-webkit-slider-thumb]:border [&::-webkit-slider-thumb]:border-[#555] [&::-webkit-slider-thumb]:bg-white"
        />
        <button type="button" aria-label="Zoom In">
          <Glyph size="h-[7px] w-[7px]" color="#2e3436">
            <path d="M8 0v16M0 8h16" strokeWidth="4" />
          </Glyph>
        </button>
      </div>
      <div className="flex h-3 flex-[34_0_0] items-center justify-center border-l border-[#dcdad8]">100%</div>
    </footer>
  );
}

export default function App() {
  return (
    <div className="flex h-screen flex-col overflow-hidden bg-[#f6f5f4] font-['Noto_Sans',sans-serif] text-[#3d4245]">
      <nav className="mr-4 flex h-[17px] shrink-0 items-center gap-px border-b border-[#e4e2e0] text-[9px]" aria-label="Menu">
        {menus.map((name) => (
          <button key={name} type="button" className="px-[5px] pt-0.5 leading-3">
            {name}
          </button>
        ))}
        <button type="button" aria-label="Close Document" className="-mr-2 ml-auto">
          <Glyph size="h-[6px] w-[6px]" color="#2e3436">
            <path d="M1 1l14 14M15 1L1 15" strokeWidth="4" />
          </Glyph>
        </button>
      </nav>
      <div className="flex h-[27px] shrink-0 items-center pl-0.5">
        <Toolbar items={standardBar} label="Standard" />
      </div>
      <div className="flex h-[26px] shrink-0 items-center pl-0.5">
        <Combo label="Font Name" value="Calibri" width="w-[138px]" italic />
        <div className="mr-px ml-[5px] flex">
          <Combo label="Font Size" value="11 pt" width="w-[67px]" />
        </div>
        <Toolbar items={formatBar} label="Formatting" />
      </div>
      <div className="flex min-h-0 flex-1">
        <main className="flex min-w-0 flex-1 flex-col">
          <div className="mb-0.5 flex h-7 shrink-0 items-center pl-0.5">
            <Combo label="Name Box" value="A1" width="w-[108px]" />
            <span className="mx-0.5 h-[22px] w-px bg-[#e2e0de]" />
            <button type="button" aria-label="Function Wizard" className="flex w-[18px] justify-center">
              {icons.fx}
            </button>
            <button type="button" aria-label="Select Function" className="flex w-6 items-center">
              {icons.sum}
              <Caret />
            </button>
            <button type="button" aria-label="Formula" className="w-4">
              {icons.equals}
            </button>
            <input aria-label="Input line" className="h-[17px] min-w-0 flex-1 border border-[#d0cdca] bg-white px-1 text-[9px]" />
            <button type="button" aria-label="Expand Formula Bar" className="flex w-[15px] justify-center">
              <Caret large />
            </button>
          </div>
          <div className="flex min-h-0 flex-1">
            <div className="flex min-w-0 flex-1 flex-col">
              <Spreadsheet />
              <div className="h-[10px] shrink-0 border-r-2 border-[#777] bg-[#cdcdcd] px-0.5 py-0.5">
                <div className="h-1.5 w-[47.5%] rounded-full bg-[#7f7f7f]" />
              </div>
            </div>
            <div className="mb-[10px] w-[9px] shrink-0 border-t-2 border-[#555] bg-[#cdcdcd] px-0.5 pt-0.5">
              <div className="h-[46%] w-[5px] rounded-full bg-[#7f7f7f]" />
            </div>
          </div>
          <SheetTabs />
        </main>
        <aside className="mt-0.5 flex w-[39px] shrink-0 border-l border-[#d0cdca]" aria-label="Sidebar">
          <button
            type="button"
            aria-label="Collapse Sidebar"
            className="flex h-[50px] w-1 shrink-0 items-center justify-center self-center bg-[#919191]"
          >
            <svg viewBox="0 0 3 4" className="h-1 w-[3px] fill-white" aria-hidden="true">
              <path d="M0 0l3 2-3 2z" />
            </svg>
          </button>
          <div className="flex flex-1 flex-col items-center gap-[13px] pt-[5px]">
            {[
              ["menu", "Sidebar Settings"],
              ["properties", "Properties"],
              ["styles", "Styles"],
              ["gallery", "Gallery"],
              ["navigator", "Navigator"],
              ["fx", "Functions"],
            ].map(([icon, label]) => (
              <button key={icon} type="button" aria-label={label}>
                {icons[icon]}
              </button>
            ))}
          </div>
        </aside>
      </div>
      <StatusBar />
    </div>
  );
}
